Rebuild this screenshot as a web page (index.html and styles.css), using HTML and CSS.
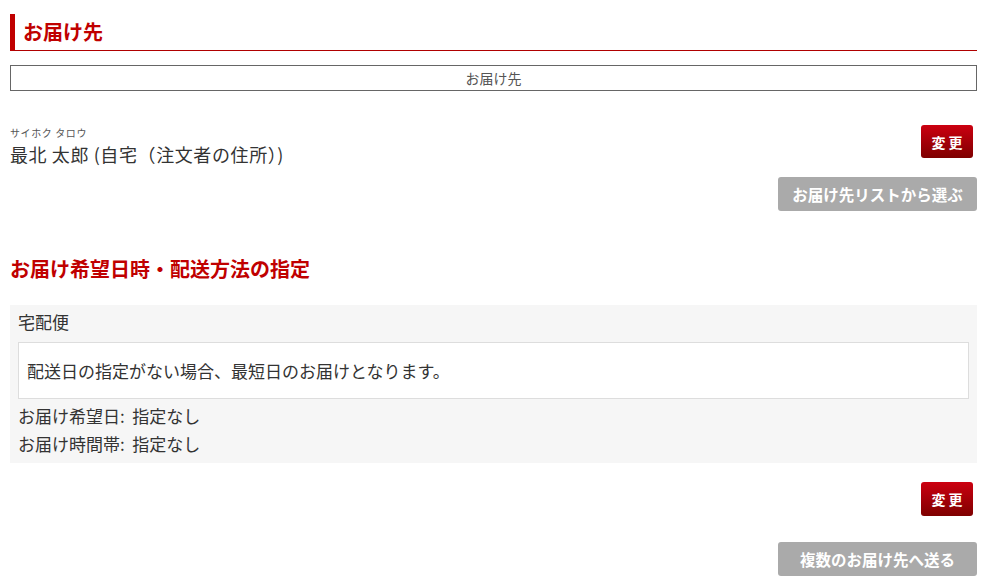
FILE: index.html
```html
<!DOCTYPE html>
<html lang="ja">
<head>
    <meta charset="UTF-8">
    <title>お届け先</title>
    <link rel="stylesheet" href="styles.css">
</head>
<body>
<div class="container">
    <h2 class="section-title">お届け先</h2>

    <div class="dest-box">お届け先</div>

    <div class="address-row">
        <div class="address">
            <div class="kana">サイホク タロウ</div>
            <div class="name">最北 太郎 (自宅（注文者の住所）)</div>
        </div>
        <button class="btn-change">変更</button>
    </div>
    <div class="btn-row list-row">
        <button class="btn-gray">お届け先リストから選ぶ</button>
    </div>

    <h2 class="sub-title">お届け希望日時・配送方法の指定</h2>

    <div class="delivery">
        <div class="method">宅配便</div>
        <div class="notice">配送日の指定がない場合、最短日のお届けとなります。</div>
        <div class="line">お届け希望日:&nbsp; 指定なし</div>
        <div class="line">お届け時間帯:&nbsp; 指定なし</div>
    </div>

    <div class="btn-row change-row">
        <button class="btn-change">変更</button>
    </div>
    <div class="btn-row multi-row">
        <button class="btn-gray">複数のお届け先へ送る</button>
    </div>
</div>
</body>
</html>
```

FILE: styles.css
```css
* {
    margin: 0;
    padding: 0;
    box-sizing: border-box;
}

body {
    font-family: "Noto Sans CJK JP", "Noto Sans", sans-serif;
    background-color: #fff;
    color: #333;
}

.container {
    padding: 14px 19px 0 10px;
}

.section-title {
    font-size: 20px;
    font-weight: bold;
    color: #c00000;
    line-height: 36px;
    padding-left: 8px;
    border-left: 5px solid #c00000;
    border-bottom: 1px solid #b00000;
    height: 37px;
}

.dest-box {
    margin-top: 14px;
    height: 26px;
    border: 1px solid #666;
    text-align: center;
    font-size: 14px;
    line-height: 24px;
    color: #555;
}

.address-row {
    display: flex;
    justify-content: space-between;
    align-items: flex-start;
    margin-top: 34px;
    padding-right: 4px;
}

.kana {
    font-size: 10px;
    line-height: 12px;
    letter-spacing: 0.6px;
    color: #555;
    margin-top: 2px;
}

.name {
    font-size: 18px;
    line-height: 24px;
    letter-spacing: 0.6px;
    margin-top: 3px;
}

.btn-change {
    width: 52px;
    height: 33px;
    border: none;
    border-radius: 3px;
    background: linear-gradient(#cc0010, #7e0000);
    color: #fff;
    font-family: inherit;
    font-size: 14px;
    font-weight: bold;
    letter-spacing: 3px;
    padding-left: 3px;
    cursor: pointer;
}

.btn-row {
    display: flex;
    justify-content: flex-end;
    margin-top: 19px;
}

.list-row {
    margin-top: 11px;
}

.btn-gray {
    width: 199px;
    height: 34px;
    border: none;
    border-radius: 3px;
    background-color: #aaa;
    color: #fff;
    font-family: inherit;
    font-size: 15.5px;
    font-weight: bold;
    cursor: pointer;
}

.sub-title {
    font-size: 20px;
    font-weight: bold;
    color: #c00000;
    line-height: 28px;
    margin-top: 44px;
    margin-bottom: 22px;
}

.delivery {
    background-color: #f6f6f6;
    padding: 2px 8px 5px 8px;
}

.method {
    font-size: 17px;
    line-height: 30px;
    margin-bottom: 5px;
}

.notice {
    background-color: #fff;
    border: 1px solid #ddd;
    font-size: 17px;
    line-height: 29px;
    padding: 13px 8px;
    margin-bottom: 3px;
}

.line {
    font-size: 17px;
    line-height: 28px;
}

.change-row {
    padding-right: 4px;
}

.change-row .btn-change {
    height: 34px;
}

.multi-row {
    margin-top: 26px;
}
```
